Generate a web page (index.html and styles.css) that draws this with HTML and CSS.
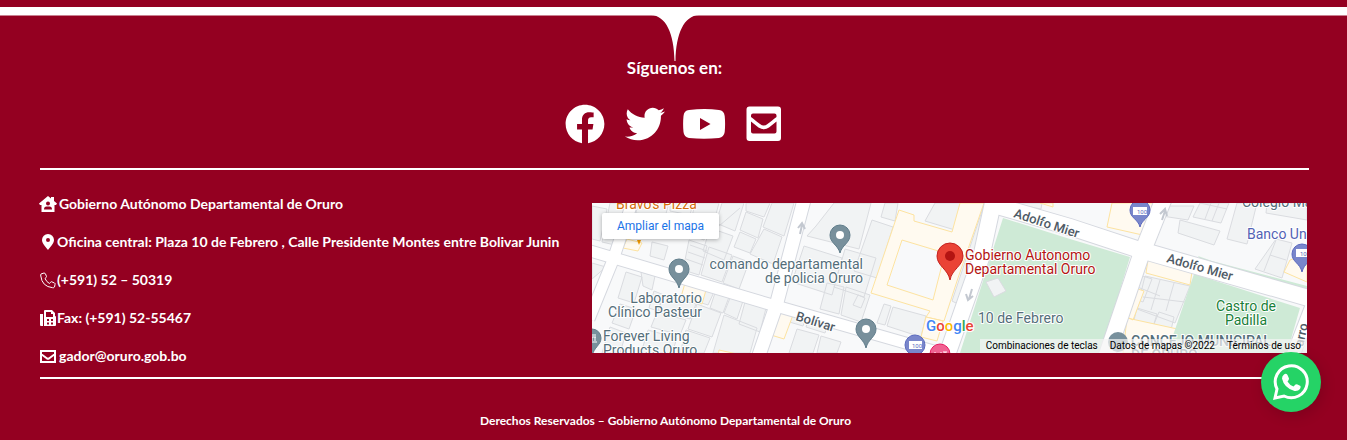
FILE: index.html
```html
<!DOCTYPE html>
<html lang="es">
<head>
<meta charset="utf-8">
<meta name="viewport" content="width=device-width, initial-scale=1">
<title>Gobierno Autónomo Departamental de Oruro</title>
<link rel="stylesheet" href="styles.css">
</head>
<body>
<footer class="footer">
  <div class="divider">
    <svg class="divider-notch" viewBox="0 0 48 48" aria-hidden="true"><path d="M0 0C15 1 23 18 23.500 46H24.500C25 18 33 1 48 0Z"/></svg>
  </div>

  <section class="follow">
    <h2 class="follow-title">Síguenos en:</h2>
    <nav class="social" aria-label="Redes sociales">
      <a class="social-link" href="#" aria-label="Facebook"><svg class="social-icon" viewBox="0 0 512 512"><path d="M504 256C504 119 393 8 256 8S8 119 8 256c0 123.780 90.690 226.380 209.250 245V327.690h-63V256h63v-54.640c0-62.150 37-96.480 93.670-96.480 27.140 0 55.520 4.840 55.520 4.840v61h-31.280c-30.800 0-40.410 19.120-40.410 38.730V256h68.780l-11 71.690h-57.780V501C413.310 482.380 504 379.780 504 256z"/></svg></a>
      <a class="social-link" href="#" aria-label="Twitter"><svg class="social-icon" viewBox="0 0 512 512"><path d="M459.370 151.716c.325 4.548.325 9.097.325 13.645 0 138.720-105.583 298.558-298.558 298.558-59.452 0-114.680-17.219-161.137-47.106 8.447.974 16.568 1.299 25.340 1.299 49.055 0 94.213-16.568 130.274-44.832-46.132-.975-84.792-31.188-98.112-72.772 6.498.974 12.995 1.624 19.818 1.624 9.421 0 18.843-1.300 27.614-3.573-48.081-9.747-84.143-51.980-84.143-102.985v-1.299c13.969 7.797 30.214 12.670 47.431 13.319-28.264-18.843-46.781-51.005-46.781-87.391 0-19.492 5.197-37.360 14.294-52.954 51.655 63.675 129.300 105.258 216.365 109.807-1.624-7.797-2.599-15.918-2.599-24.040 0-57.828 46.782-104.934 104.934-104.934 30.213 0 57.502 12.670 76.670 33.137 23.715-4.548 46.456-13.320 66.599-25.340-7.798 24.366-24.366 44.833-46.132 57.827 21.117-2.273 41.584-8.122 60.426-16.243-14.292 20.791-32.161 39.308-52.628 54.253z"/></svg></a>
      <a class="social-link" href="#" aria-label="YouTube"><svg class="social-icon social-icon-wide" viewBox="0 0 44 40"><path fill-rule="evenodd" d="M6 6Q22 4 36 6Q41 6.500 41.700 12Q42.500 20 41.700 28Q41 33 36 34Q21 35.500 6 34Q1 33 .500 28Q-.3 20 .500 12Q1 6.500 6 6ZM17 14V26L27.500 20Z"/></svg></a>
      <a class="social-link" href="#" aria-label="Correo"><svg class="social-icon" viewBox="0 0 40 40"><path fill-rule="evenodd" d="M4.500 2.500H33Q36 2.500 36 5.500V34Q36 37 33 37H4.500Q1.500 37 1.500 34V5.500Q1.500 2.500 4.500 2.500ZM8 9.500Q6 9.500 6 11.500V13C9 15.500 12.500 18 15 20C17.500 22 20 22 22.500 20C25 18 28.500 15.500 31.500 13V11.500Q31.500 9.500 29.500 9.500ZM6 17.500V27.500Q6 29.500 8 29.500H29.500Q31.500 29.500 31.500 27.500V17.500L24 23.500Q19 27 13.500 23.500Z"/></svg></a>
    </nav>
  </section>

  <section class="details">
    <address class="contact">
      <p class="contact-row contact-row-spaced"><svg class="contact-icon" viewBox="0 0 18 18"><path fill-rule="evenodd" d="M9 1L12 3.500V2H15V6L18 8.500L17 10H15.500V17H2.500V10H1L0 8.500ZM9 6.500A2 2 0 1 0 9 10.500A2 2 0 1 0 9 6.500ZM5 14.500H13Q13 11.500 10.500 11.500H7.500Q5 11.500 5 14.500Z"/></svg> Gobierno Autónomo Departamental de Oruro</p>
      <p class="contact-row"><svg class="contact-icon" viewBox="0 0 18 18"><path fill-rule="evenodd" d="M9 1A6 6 0 0 1 15 7C15 10 11.500 14 9 17C6.500 14 3 10 3 7A6 6 0 0 1 9 1ZM9 5A2 2 0 1 0 9 9A2 2 0 1 0 9 5Z"/></svg>Oficina central: Plaza 10 de Febrero , Calle Presidente Montes entre Bolivar Junin</p>
      <p class="contact-row"><svg class="contact-icon contact-icon-outline" viewBox="0 0 18 18"><path d="M2 3L5 2Q6 2 6.500 3L7.500 5.500Q7.500 6.500 6 7.500Q7.500 11 10.500 12.500Q11.500 11 12.500 10.700L15.500 12Q16.500 12.500 16 13.500L15.500 16Q15 17 13.500 16.700Q3 15.500 1.800 5Q1.500 3.500 2 3Z"/></svg><a class="contact-link" href="tel:+5915250319">(+591) 52 – 50319</a></p>
      <p class="contact-row"><svg class="contact-icon" viewBox="0 0 18 18"><path fill-rule="evenodd" d="M1 5H4V17H2Q1 17 1 16ZM5 17V2Q5 1 6 1H13L16 4V7Q17 7 17 8V16Q17 17 16 17ZM7 3V8H14V5H12V3ZM8 10V12H10V10ZM12 10V12H14V10ZM8 13.500V15.500H10V13.500ZM12 13.500V15.500H14V13.500Z"/></svg>Fax: (+591) 52-55467</p>
      <p class="contact-row contact-row-spaced"><svg class="contact-icon contact-icon-mail" viewBox="0 0 18 18"><path d="M2 4H16V15H2ZM2 7L8 11.500Q9 12 10 11.500L16 7"/></svg> <a class="contact-link" href="mailto:gador@oruro.gob.bo">gador@oruro.gob.bo</a></p>
    </address>

    <div class="map">
      <svg class="map-canvas" viewBox="0 0 715 150" preserveAspectRatio="xMidYMid slice" role="img" aria-label="Mapa de Oruro">
        <rect class="ground" width="715" height="150"/>
        <g class="blocks">
          <path d="M0 3L15 6L8 38L0 36ZM18 0H38L27 43L10 39ZM46 0H77L73 14L44 10ZM78 0H101L98 12L78 8ZM103 0H127L121 22L100 14ZM130 0H152L143 28L124 20ZM154 0H178L172 14L154 8ZM180 0H202L192 33L171 24ZM154 9L171 16L166 35L148 27ZM172 26L190 34L181 61L158 51ZM148 29L164 36L158 50L142 44ZM118 25L141 33L132 57L111 48ZM127 23L148 5M60 39L76 43L72 57L58 53ZM97 37L115 43L107 72L91 67ZM117 44L140 52L130 79L109 72ZM141 53L157 59L147 86L131 80Z"/>
          <path d="M98 42L115 48M96 49L113 55M94 56L111 62M102 13L119 22L112 37L96 31ZM49 69L63 73L60 87L51 83ZM34 69L50 74L42 100L26 95ZM28 101L44 106L37 126L20 120ZM0 76L14 64L0 60ZM18 124L34 130L28 150H10ZM62 88L72 92L66 108L57 105ZM71 93L104 101L98 116L66 107ZM108 85L122 89L116 102L104 98ZM123 90L137 94L131 110L118 105ZM138 95L151 98L145 116L132 110ZM153 99L174 105L168 129L147 121ZM105 101L129 110L120 134L96 126ZM132 112L165 125L158 150H121ZM94 127L118 135L112 150H88ZM65 109L94 117L88 132L59 124ZM56 127L85 135L80 150H49Z"/>
          <path d="M224 23L242 0H279L267 46L215 33ZM212 43L250 55L240 92L200 79ZM253 46L284 55L272 94L242 84ZM280 17L301 24L285 75L262 68ZM293 0H306L303 18L289 14ZM343 0H377L363 27L333 18ZM198 103L216 109L211 123L194 118ZM219 108L238 114L233 130L214 124ZM205 126L227 132L221 150H197ZM229 133L249 139L245 150H225ZM235 80L252 84L247 111L228 106ZM254 84L278 92L269 119L249 112ZM292 101L299 103L293 122L285 120ZM301 104L334 113L329 134L295 123ZM391 5L396 8L366 101L360 98ZM266 92L273 95L269 105L261 102Z"/>
          <path d="M411 0H450L449 6L419 0ZM576 3H602L596 17L570 13ZM588 17L628 28L622 42L586 30ZM608 0H637L629 20L601 14ZM645 0H665L655 41L635 36ZM675 0H715V17L674 10ZM684 36L700 40L690 75L663 66ZM619 0L613 16M627 0L620 18M635 6L608 0M684 37L672 68M678 52L694 57M541 70L560 76L551 99L536 93ZM553 73L598 83L583 120L545 106ZM568 77L559 107M582 80L574 108M551 94L593 99M543 83L568 93M545 105L565 111L561 124L542 117ZM567 109L582 114L579 127L562 121Z"/>
        </g>
        <g class="campus">
          <path d="M307 7L322 12V18L360 29L368 0H392L366 75L352 118L334 114L338 108L279 90ZM310 37L353 50L341 97L295 82Z"/>
          <path d="M35 36L50 40L46 48L31 45ZM93 80L114 87L110 101L89 94ZM187 108L201 112L192 136L179 132ZM127 147L154 153H126ZM520 0H568L555 33L515 24ZM557 50L601 62L598 82L554 70ZM546 86L552 88L541 117L535 114ZM535 115L590 127L582 150H531ZM698 57L715 51V79L692 69ZM334 114L351 118L345 138L329 134ZM448 0H461V4Z"/>
        </g>
        <g class="parks">
          <path d="M411 15L478 36L538 54L509 150H368Z"/>
          <path d="M602 71L708 105L695 150H575Z"/>
          <path d="M606 53L620 58L715 83V89L610 59ZM514 33L530 38L552 39V43L515 38Z"/>
          <path class="kiosk" d="M394 79L406 75L414 88L402 94Z"/>
        </g>
        <g class="road-case">
          <path class="road" d="M41-3L21 57L-3 116"/><path class="road" d="M-5 47L177 101L345 149"/><path class="road road-mid" d="M212-3L184 103L166 155"/>
          <path class="road road-big" d="M402-5L389 55L354 155"/><path class="road road-big" d="M395 0L478 24L545 46L720 96"/><path class="road road-big" d="M572-5L548 55L514 155"/><path class="road road-mid" d="M720 103L700 155"/>
        </g>
        <g class="road-fill">
          <path class="road" d="M41-3L21 57L-3 116"/><path class="road" d="M-5 47L177 101L345 149"/><path class="road road-mid" d="M212-3L184 103L166 155"/>
          <path class="road road-big" d="M402-5L389 55L354 155"/><path class="road road-big" d="M395 0L478 24L545 46L720 96"/><path class="road road-big" d="M572-5L548 55L514 155"/><path class="road road-mid" d="M720 103L700 155"/>
        </g>
        <g class="road-arrows">
          <path d="M208 31L210 22M206 25L210 20L213 26"/><path d="M570 17L573 8M568 11L573 6L575 13"/><path d="M380 86L377 96M374 91L376 97L381 93"/>
        </g>
        <g class="labels">
          <text x="24" y="6" class="label-food">Bravo's Pizza</text>
          <text x="271" y="66" class="label-end">comando departamental</text><text x="271" y="80" class="label-end">de policia Oruro</text>
          <text x="110" y="100" class="label-end">Laboratorio</text><text x="110" y="114" class="label-end">Clínico Pasteur</text>
          <text x="11" y="138">Forever Living</text><text x="11" y="152">Products Oruro</text>
          <text x="386" y="120">10 de Febrero</text>
          <text x="650" y="4">Colegio María</text>
          <text x="655" y="36" class="label-bank">Banco Unión</text>
          <text x="539" y="143" class="label-strong">CONCEJO MUNICIPAL</text><text x="539" y="157" class="label-strong">DE ORURO</text>
          <text x="654" y="108" class="label-park">Castro de</text><text x="654" y="122" class="label-park">Padilla</text>
          <text x="373" y="57" class="label-main">Gobierno Autonomo</text><text x="373" y="71" class="label-main">Departamental Oruro</text>
          <text class="label-street" transform="translate(203 117) rotate(17)">Bolívar</text>
          <text class="label-street" transform="translate(421 14) rotate(18)">Adolfo Mier</text>
          <text class="label-street" transform="translate(574 59) rotate(16)">Adolfo Mier</text>
          <text class="label-street" transform="translate(711 144) rotate(-77)">arro</text>
        </g>
        <path class="food-pin" d="M45 37H49L47 42Z"/>
        <g class="pins">
          <path d="M87 85C85 76 77 74 77 66A10 10 0 1 1 97 66C97 74 89 76 87 85Z"/><circle cx="87" cy="66" r="4"/>
          <path d="M248 50C246 42 238 40 238 32A10 10 0 1 1 258 32C258 40 250 42 248 50Z"/><circle cx="248" cy="32" r="4"/>
          <path d="M274 145C272 136 264 134 264 126A10 10 0 1 1 284 126C284 134 276 136 274 145Z"/><circle cx="274" cy="126" r="4"/>
          <path d="M0 153C-1 144-9 143-9 135A9 9 0 1 1 9 135C9 142 2 144 0 153Z"/><path class="pin-mark" d="M-1 132H4M-1 134H4M0 134V138M3 134V138M-1 139H5"/>
          <circle class="pin-round" cx="526" cy="139" r="10"/>
        </g>
        <g class="atm-pins">
          <path d="M548 24C546 16 538 15 538 7A10 10 0 1 1 558 7C558 15 550 16 548 24Z"/><path d="M710 69C708 60 700 59 700 51A10 10 0 1 1 720 51C720 59 712 60 710 69Z"/><circle cx="323" cy="142" r="10"/>
          <rect x="541" y="4" width="14" height="8"/><rect x="704" y="46" width="14" height="8"/><rect x="317" y="138" width="13" height="8"/>
          <text x="545" y="11">100</text><text x="708" y="53">100</text><text x="320" y="145">100</text>
        </g>
        <circle class="hotel-pin" cx="348" cy="151" r="10"/><path class="hotel-mark" d="M343 149V153M343 151H346M349 149V153M353 149V153M351 149H355"/>
        <path class="main-pin" d="M358 77C356 66 345 63 345 53A13 13 0 1 1 371 53C371 63 360 66 358 77Z"/><circle class="main-pin-dot" cx="358" cy="53" r="5"/>
        <text class="google" x="334" y="128"><tspan class="g-blue">G</tspan><tspan class="g-red">o</tspan><tspan class="g-yellow">o</tspan><tspan class="g-blue">g</tspan><tspan class="g-green">l</tspan><tspan class="g-red">e</tspan></text>
      </svg>
      <a class="map-expand" href="#">Ampliar el mapa</a>
      <div class="map-legal">
        <button class="map-legal-item" type="button">Combinaciones de teclas</button>
        <span class="map-legal-item">Datos de mapas ©2022</span>
        <a class="map-legal-item" href="#">Términos de uso</a>
      </div>
    </div>
  </section>

  <p class="copyright">Derechos Reservados – Gobierno Autónomo Departamental de Oruro</p>
</footer>

<a class="whatsapp" href="#" aria-label="WhatsApp"><svg class="whatsapp-icon" viewBox="0 0 38 38"><path class="whatsapp-ring" d="M3 35L5 26A16 16 0 1 1 12 33Z"/><path d="M12 11.500Q14 10 15.500 12L17 15.500Q17 17 15.500 18.500Q17.500 22 21.500 23.500L23.500 21.500Q24.500 21 25.500 21.500L28.500 23Q29 24 28 26Q26 28.500 22.500 28Q12 25 10 15.500Q10 13 12 11.500Z"/></svg></a>
</body>
</html>
```

FILE: styles.css
```css
* { box-sizing: border-box; }

body {
  margin: 0;
  background: #940021;
  color: #fff;
  font-family: Lato, "Open Sans", sans-serif;
  font-weight: 700;
}

a { color: inherit; text-decoration: none; }

.footer { padding-top: 7px; }

/* White band with the pointed notch hanging under its centre */
.divider {
  position: relative;
  height: 8px;
  background: #fff;
  box-shadow: 0 1px #c98090;
}
.divider-notch {
  position: absolute;
  top: 8px;
  left: 50%;
  width: 48px;
  height: 48px;
  margin-left: -23px;
  fill: #fff;
}

.follow {
  display: flex;
  flex-direction: column;
  align-items: center;
  gap: 24px;
  margin: 0 38px 0 40px;
  padding: 41px 0 24px;
  border-bottom: 2px solid #fff;
}
.follow-title { margin: 0; font-size: 17px; line-height: 24px; }
.social { display: flex; gap: 20px; }
.social-link { display: flex; }
.social-icon { width: 40px; height: 40px; fill: #fff; }
.social-icon-wide { width: 44px; margin: 0 -2px; }

.details {
  display: grid;
  grid-template-columns: 552fr 715fr;
  align-items: start;
  margin: 0 38px 0 40px;
  padding: 22px 2px 9px 0;
  border-bottom: 2px solid #fff;
}
.contact {
  display: flex;
  flex-direction: column;
  gap: 14px;
  font-size: 14px;
  font-style: normal;
  line-height: 24px;
}
.contact-row { display: flex; align-items: center; margin: 0; }
.contact-row-spaced { gap: 2px; }
.contact-icon { flex: none; width: 18px; height: 18px; margin-left: -1px; fill: #fff; }
.contact-icon-outline { fill: none; stroke: #fff; stroke-width: 1; }
.contact-icon-mail { fill: none; stroke: #fff; stroke-width: 2; }

.map {
  position: relative;
  height: 150px;
  margin-top: 11px;
  overflow: hidden;
  font-family: Roboto, sans-serif;
  font-weight: 400;
}
.map-canvas { display: block; width: 100%; height: 100%; }
.ground { fill: #f8f9fa; }
.blocks { fill: #f1f3f4; stroke: #dadce0; }
.campus { fill: #fffaf0; fill-rule: evenodd; stroke: #fde3a0; }
.parks { fill: #ceead6; }
.kiosk { fill: #f1f3f4; stroke: #dadce0; }
.road { stroke-width: 11; }
.road-mid { stroke-width: 13; }
.road-big { stroke-width: 16; }
.road-fill { fill: none; stroke: #fff; }
.road-case { fill: none; stroke: #d5d8df; }
.road-case .road { stroke-width: 13; }
.road-case .road-mid { stroke-width: 15; }
.road-case .road-big { stroke-width: 18; }
.road-arrows { fill: none; stroke: #c3c8d0; stroke-width: 2; }

.labels {
  fill: #546e7a;
  stroke: #fff;
  stroke-width: 2;
  stroke-linejoin: round;
  paint-order: stroke;
  font-size: 14px;
}
.label-end { text-anchor: end; }
.label-food { fill: #d56e0c; }
.label-bank { fill: #5362b5; }
.label-park { fill: #188038; text-anchor: middle; }
.label-main { fill: #b31412; }
.label-strong { font-weight: 500; }
.label-street { fill: #4f5b66; font-size: 13px; font-weight: 500; }
.food-pin { fill: #f29900; }
.pins { fill: #78909c; stroke: #607d8b; }
.pins circle { fill: #fff; stroke: none; }
.pins .pin-round { fill: #78909c; }
.pins .pin-mark { fill: none; stroke: #fff; }
.atm-pins { fill: #7986cb; stroke: #5c6bc0; }
.atm-pins rect { fill: #fff; stroke: none; }
.atm-pins text { fill: #5c6bc0; stroke: none; font-size: 6px; }
.hotel-pin { fill: #f06292; stroke: #e91e63; }
.hotel-mark { stroke: #fff; }
.main-pin { fill: #ea4335; stroke: #c5221f; }
.main-pin-dot { fill: #b31412; }
.google {
  stroke: #fff;
  stroke-width: 2;
  paint-order: stroke;
  font-size: 15px;
  font-weight: 500;
}
.g-blue { fill: #4285f4; }
.g-red { fill: #ea4335; }
.g-yellow { fill: #fbbc04; }
.g-green { fill: #34a853; }

.map-expand {
  position: absolute;
  top: 10px;
  left: 10px;
  padding: 0 15px;
  border-radius: 2px;
  background: #fff;
  box-shadow: 0 1px 4px rgba(0, 0, 0, 0.3);
  color: #1a73e8;
  font-size: 12px;
  line-height: 26px;
}
.map-legal {
  position: absolute;
  right: 0;
  bottom: 0;
  display: flex;
  gap: 12px;
  padding: 0 6px;
  background: rgba(245, 245, 245, 0.7);
  color: #000;
  font-size: 10px;
  line-height: 14px;
}
.map-legal-item {
  padding: 0;
  border: 0;
  background: none;
  color: inherit;
  font: inherit;
}

.copyright {
  margin: 0;
  padding: 30px 16px 7px 0;
  font-size: 12px;
  line-height: 24px;
  text-align: center;
}

.whatsapp {
  position: fixed;
  right: 26px;
  bottom: 28px;
  display: flex;
  align-items: center;
  justify-content: center;
  width: 60px;
  height: 60px;
  border-radius: 50%;
  background: #25d366;
  box-shadow: 2px 4px 14px rgba(0, 0, 0, 0.15);
}
.whatsapp-icon { width: 38px; height: 38px; fill: #fff; }
.whatsapp-ring { fill: none; stroke: #fff; stroke-width: 3; }
```
